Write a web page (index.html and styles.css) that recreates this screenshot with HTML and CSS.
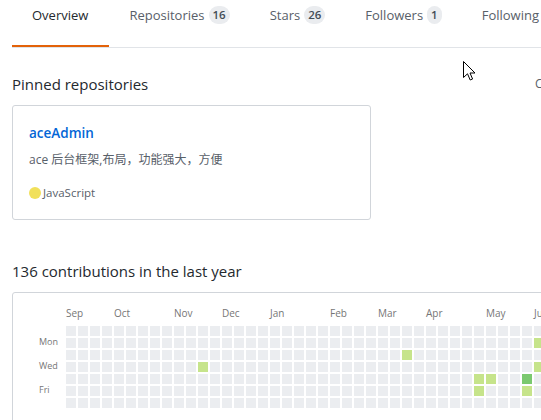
FILE: index.html
```html
<!DOCTYPE html>
<html lang="en">
<head>
<meta charset="utf-8">
<title>Profile overview</title>
<link rel="stylesheet" href="styles.css">
</head>
<body>
<div class="page">
  <nav class="tabs">
    <a class="tab selected">Overview</a>
    <a class="tab">Repositories <span class="counter">16</span></a>
    <a class="tab">Stars <span class="counter">26</span></a>
    <a class="tab">Followers <span class="counter">1</span></a>
    <a class="tab">Following <span class="counter">0</span></a>
  </nav>

  <div class="pinned-head">
    <h2 class="section-title">Pinned repositories</h2>
    <a class="customize">Customize your pins</a>
  </div>
  <div class="pinned-grid">
    <div class="repo-card">
      <a class="repo-name">aceAdmin</a>
      <p class="repo-desc">ace 后台框架,布局，功能强大，方便</p>
      <p class="repo-meta"><span class="lang-dot"></span>JavaScript</p>
    </div>
  </div>

  <h2 class="section-title contrib-title">136 contributions in the last year</h2>
  <div class="calendar">
    <div class="months">
      <span class="month" style="grid-column-start:1">Sep</span>
      <span class="month" style="grid-column-start:5">Oct</span>
      <span class="month" style="grid-column-start:10">Nov</span>
      <span class="month" style="grid-column-start:14">Dec</span>
      <span class="month" style="grid-column-start:18">Jan</span>
      <span class="month" style="grid-column-start:23">Feb</span>
      <span class="month" style="grid-column-start:27">Mar</span>
      <span class="month" style="grid-column-start:31">Apr</span>
      <span class="month" style="grid-column-start:36">May</span>
      <span class="month" style="grid-column-start:40">Jun</span>
    </div>
    <div class="cal-body">
      <div class="days">
        <span></span><span>Mon</span><span></span><span>Wed</span><span></span><span>Fri</span><span></span>
      </div>
      <div class="weeks">
        <div class="week"><i></i><i></i><i></i><i></i><i></i><i></i><i></i></div>
        <div class="week"><i></i><i></i><i></i><i></i><i></i><i></i><i></i></div>
        <div class="week"><i></i><i></i><i></i><i></i><i></i><i></i><i></i></div>
        <div class="week"><i></i><i></i><i></i><i></i><i></i><i></i><i></i></div>
        <div class="week"><i></i><i></i><i></i><i></i><i></i><i></i><i></i></div>
        <div class="week"><i></i><i></i><i></i><i></i><i></i><i></i><i></i></div>
        <div class="week"><i></i><i></i><i></i><i></i><i></i><i></i><i></i></div>
        <div class="week"><i></i><i></i><i></i><i></i><i></i><i></i><i></i></div>
        <div class="week"><i></i><i></i><i></i><i></i><i></i><i></i><i></i></div>
        <div class="week"><i></i><i></i><i></i><i></i><i></i><i></i><i></i></div>
        <div class="week"><i></i><i></i><i></i><i></i><i></i><i></i><i></i></div>
        <div class="week"><i></i><i></i><i></i><i class="l1"></i><i></i><i></i><i></i></div>
        <div class="week"><i></i><i></i><i></i><i></i><i></i><i></i><i></i></div>
        <div class="week"><i></i><i></i><i></i><i></i><i></i><i></i><i></i></div>
        <div class="week"><i></i><i></i><i></i><i></i><i></i><i></i><i></i></div>
        <div class="week"><i></i><i></i><i></i><i></i><i></i><i></i><i></i></div>
        <div class="week"><i></i><i></i><i></i><i></i><i></i><i></i><i></i></div>
        <div class="week"><i></i><i></i><i></i><i></i><i></i><i></i><i></i></div>
        <div class="week"><i></i><i></i><i></i><i></i><i></i><i></i><i></i></div>
        <div class="week"><i></i><i></i><i></i><i></i><i></i><i></i><i></i></div>
        <div class="week"><i></i><i></i><i></i><i></i><i></i><i></i><i></i></div>
        <div class="week"><i></i><i></i><i></i><i></i><i></i><i></i><i></i></div>
        <div class="week"><i></i><i></i><i></i><i></i><i></i><i></i><i></i></div>
        <div class="week"><i></i><i></i><i></i><i></i><i></i><i></i><i></i></div>
        <div class="week"><i></i><i></i><i></i><i></i><i></i><i></i><i></i></div>
        <div class="week"><i></i><i></i><i></i><i></i><i></i><i></i><i></i></div>
        <div class="week"><i></i><i></i><i></i><i></i><i></i><i></i><i></i></div>
        <div class="week"><i></i><i></i><i></i><i></i><i></i><i></i><i></i></div>
        <div class="week"><i></i><i></i><i class="l1"></i><i></i><i></i><i></i><i></i></div>
        <div class="week"><i></i><i></i><i></i><i></i><i></i><i></i><i></i></div>
        <div class="week"><i></i><i></i><i></i><i></i><i></i><i></i><i></i></div>
        <div class="week"><i></i><i></i><i></i><i></i><i></i><i></i><i></i></div>
        <div class="week"><i></i><i></i><i></i><i></i><i></i><i></i><i></i></div>
        <div class="week"><i></i><i></i><i></i><i></i><i></i><i></i><i></i></div>
        <div class="week"><i></i><i></i><i></i><i></i><i class="l1"></i><i class="l1"></i><i></i></div>
        <div class="week"><i></i><i></i><i></i><i></i><i class="l1"></i><i></i><i></i></div>
        <div class="week"><i></i><i></i><i></i><i></i><i></i><i></i><i></i></div>
        <div class="week"><i></i><i></i><i></i><i></i><i></i><i></i><i></i></div>
        <div class="week"><i></i><i></i><i></i><i></i><i class="l2"></i><i class="l1"></i><i></i></div>
        <div class="week"><i></i><i class="l1"></i><i></i><i class="l1"></i><i></i><i></i><i></i></div>
        <div class="week"><i></i><i></i><i></i><i></i><i></i><i></i><i></i></div>
      </div>
    </div>
  </div>
</div>
<svg class="cursor" width="13" height="20" viewBox="0 0 13 20" aria-hidden="true">
  <path d="M0.5 0.5 L0.5 16.5 L4.5 12.8 L7.2 19 L9.6 18 L7 12 L12 12 Z" fill="#fff" stroke="#000" stroke-width="1" stroke-linejoin="miter"/>
</svg>
</body>
</html>
```

FILE: styles.css
```css
html, body {
  margin: 0;
  padding: 0;
  background: #fff;
  overflow: hidden;
}
body {
  font-family: "Segoe UI", "Open Sans", "Noto Sans CJK SC", sans-serif;
  color: #24292e;
  width: 541px;
  height: 420px;
  position: relative;
}
.page {
  width: 760px;
  padding-left: 12px;
}
.tabs {
  display: flex;
  border-bottom: 1px solid #e1e4e8;
  height: 47px;
}
.tab {
  display: flex;
  align-items: flex-start;
  gap: 4px;
  padding: 5px 20px 0;
  font-size: 13px;
  line-height: 20px;
  color: #586069;
  border-bottom: 2px solid transparent;
  white-space: nowrap;
  box-sizing: border-box;
  height: 47px;
}
.tab.selected {
  color: #24292e;
  border-bottom-color: #e36209;
  padding-right: 21px;
}
.counter {
  display: inline-block;
  margin-top: 1px;
  padding: 0 4px;
  min-width: 6px;
  text-align: center;
  font-size: 11.5px;
  font-weight: 600;
  line-height: 18px;
  color: #444d56;
  background: #eaecef;
  border-radius: 9px;
}
.pinned-head {
  display: grid;
  grid-template-columns: 523px auto;
  margin-top: 25px;
}
.section-title {
  margin: 0;
  font-size: 15px;
  font-weight: 400;
  line-height: 22px;
  white-space: nowrap;
}
.customize {
  font-size: 12px;
  line-height: 22px;
  color: #586069;
  white-space: nowrap;
}
.pinned-grid {
  display: grid;
  grid-template-columns: 359px 359px;
  gap: 12px;
  margin-top: 10px;
}
.repo-card {
  border: 1px solid #d1d5da;
  border-radius: 3px;
  padding: 16px 16px 0;
  height: 115px;
  box-sizing: border-box;
}
.repo-name {
  display: block;
  font-size: 13.5px;
  font-weight: 600;
  line-height: 22px;
  color: #0366d6;
}
.repo-desc {
  margin: 5px 0 0;
  font-size: 12px;
  line-height: 22px;
  color: #586069;
}
.repo-meta {
  margin: 13px 0 0;
  display: flex;
  align-items: center;
  gap: 2px;
  font-size: 11.5px;
  line-height: 18px;
  color: #586069;
}
.lang-dot {
  width: 12px;
  height: 12px;
  border-radius: 50%;
  background: #f1e05a;
}
.contrib-title {
  margin-top: 40px;
}
.calendar {
  margin-top: 10px;
  border: 1px solid #d1d5da;
  border-radius: 3px;
  padding: 14px 0 12px 53px;
  height: 140px;
  box-sizing: border-box;
}
.months {
  display: grid;
  grid-template-columns: repeat(41, 12px);
  height: 13px;
  margin-bottom: 6px;
  font-size: 10px;
  line-height: 13px;
  color: #767676;
}
.month {
  grid-row: 1;
  white-space: nowrap;
}
.cal-body {
  display: flex;
  margin-left: -27px;
}
.days {
  width: 27px;
  display: flex;
  flex-direction: column;
  gap: 2px;
  font-size: 9px;
  line-height: 8px;
  color: #767676;
}
.days span {
  height: 10px;
  display: block;
}
.weeks {
  display: flex;
  gap: 2px;
}
.week {
  display: flex;
  flex-direction: column;
  gap: 2px;
}
.week i {
  display: block;
  width: 10px;
  height: 10px;
  background: #ebedf0;
}
.week i.l1 {
  background: #c6e48b;
}
.week i.l2 {
  background: #7bc96f;
}
.cursor {
  position: absolute;
  left: 463px;
  top: 61px;
}
```
